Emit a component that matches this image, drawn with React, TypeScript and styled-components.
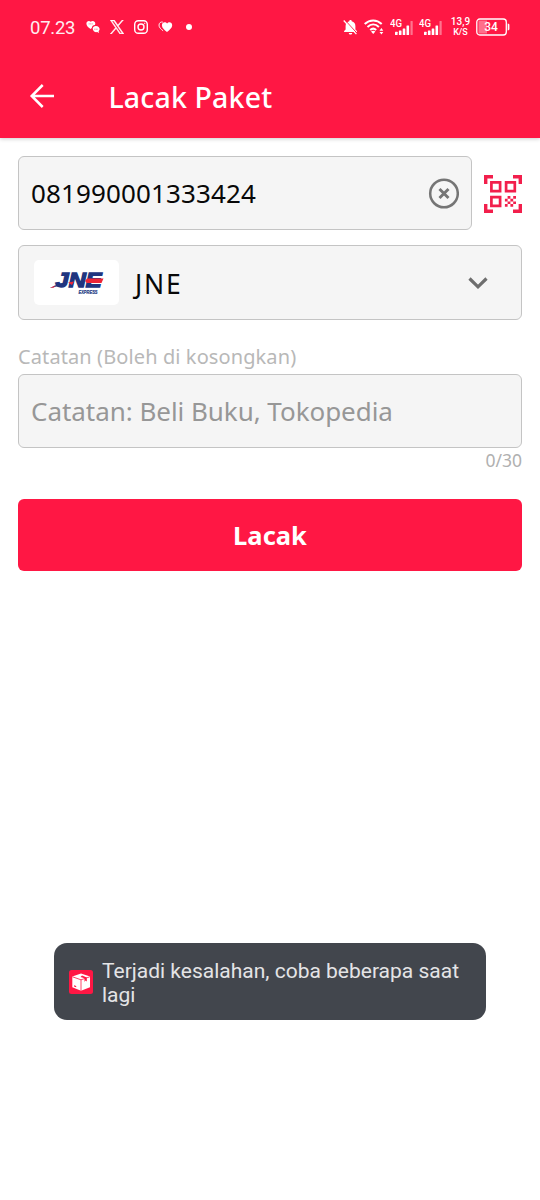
import React from 'react';
import styled, { createGlobalStyle } from 'styled-components';

const RED = '#ff1744';

const GlobalStyle = createGlobalStyle`
  * { box-sizing: border-box; }
  body { margin: 0; background: #fff; font-family: 'Noto Sans', sans-serif; }
`;

const Screen = styled.div`
  width: 540px;
  height: 1200px;
  display: flex;
  flex-direction: column;
  background: #fff;
  overflow: hidden;
`;

const Header = styled.header`
  height: 138px;
  flex: none;
  background: ${RED};
  color: #fff;
  box-shadow: 0 1px 4px rgba(0, 0, 0, 0.2);
`;

const StatusBar = styled.div`
  height: 54px;
  padding: 0 30px;
  display: flex;
  align-items: center;
  justify-content: space-between;
  font-family: Roboto, sans-serif;
`;

const StatusGroup = styled.div<{ $gap: number }>`
  display: flex;
  align-items: center;
  gap: ${(p) => p.$gap}px;
  svg { display: block; }
`;

const Clock = styled.span`
  width: 46px;
  font-size: 18.5px;
  line-height: 22px;
  letter-spacing: -0.25px;
  padding-top: 2px;
  opacity: 0.92;
`;

const Dot = styled.span`
  width: 6px;
  height: 6px;
  margin-left: 3px;
  border-radius: 50%;
  background: #fff;
`;

const Speed = styled.span`
  display: flex;
  flex-direction: column;
  align-items: center;
  width: 19px;
  margin-left: 3px;
  font-size: 9px;
  font-weight: 500;
  line-height: 10px;
  white-space: nowrap;
`;

const SpeedFigure = styled.span`
  font-size: 10px;
`;

const TitleBar = styled.div`
  height: 84px;
  padding-left: 28px;
  display: flex;
  align-items: center;
`;

const Title = styled.h1`
  margin: 0 0 0 52.5px;
  padding-top: 2px;
  font-size: 28.500px;
  line-height: 40px;
  font-weight: 500;
  letter-spacing: 0.15px;
  white-space: nowrap;
`;

const Form = styled.main`
  padding: 18px 18px 0;
  display: flex;
  flex-direction: column;
`;

const Row = styled.div`
  display: flex;
  align-items: center;
  gap: 12px;
  margin-bottom: 15px;
`;

const Field = styled.div<{ $height: number; $left?: number; $right?: number }>`
  flex: 1;
  height: ${(p) => p.$height}px;
  padding: 0 ${(p) => p.$right ?? 12}px 0 ${(p) => p.$left ?? 12}px;
  display: flex;
  align-items: center;
  background: #f5f5f5;
  border: 1px solid #c4c4c4;
  border-radius: 6px;
  svg { display: block; }
`;

const Value = styled.span<{ $muted?: boolean; $tracking?: number; $size?: number }>`
  flex: 1;
  font-size: ${(p) => p.$size ?? 26}px;
  line-height: 36px;
  letter-spacing: ${(p) => p.$tracking ?? 0}px;
  color: ${(p) => (p.$muted ? '#979797' : '#080808')};
  white-space: nowrap;
`;

const CourierName = styled(Value)`
  padding-top: 2px;
`;

const LogoCard = styled.span`
  width: 85px;
  height: 45px;
  margin-right: 16px;
  background: #fff;
  border-radius: 5px;
`;

const Note = styled.section`
  display: flex;
  flex-direction: column;
  padding-top: 10px;
`;

const NoteField = styled(Field)`
  flex: none;
`;

const Label = styled.label`
  height: 29px;
  font-size: 20px;
  line-height: 24px;
  letter-spacing: 0.1px;
  color: #b8b8b8;
  white-space: nowrap;
`;

const Counter = styled.span`
  height: 25px;
  align-self: flex-end;
  font-size: 17.500px;
  line-height: 24px;
  color: #b0b0b0;
`;

const Submit = styled.button`
  height: 72px;
  margin-top: 26px;
  border: 0;
  border-radius: 6px;
  background: ${RED};
  color: #fff;
  font: 700 25.5px/36px 'Noto Sans', sans-serif;
`;

const Toast = styled.div`
  width: 432px;
  height: 77px;
  margin: auto auto 180px;
  padding: 0 15px;
  display: flex;
  align-items: center;
  gap: 9px;
  border-radius: 13px;
  background: #42464d;
  color: #e4e4e6;
  font: 400 21px/24px Roboto, sans-serif;
  svg { display: block; flex: none; }
`;

const ToastText = styled.span`
  padding-top: 3px;
`;

const ChatHearts = () => (
  <svg width="14" height="14" viewBox="0 0 14 14" fill="#fff">
    <path d="M4.600 9C2 7.400.4 5.500.4 3.500.400.900 3.300.2 4.700 1.800 6.200.200 9.300.900 9.300 3.500c0 .6-.2 1.100-.4 1.500C7.200 5 6 6.200 5.800 8z" />
    <path d="M6.700 8.500C6.900 6.800 8.300 5.700 10 5.900c2.200.1 3.600 1.500 3.600 3.100 0 1-.5 1.700-1 2.200l.5 1.700-1.900-.8c-2.200.4-4.400-.8-4.500-3.600z" />
    <path d="M2.700 3.900h4M8.300 9.200h3.600" stroke={RED} strokeWidth=".6" strokeDasharray="1 .5" />
  </svg>
);

const XLogo = () => (
  <svg width="14" height="14" viewBox="0 0 24 24" fill="#fff" stroke="#fff" strokeWidth=".9">
    <path d="M14.300 10.200 23 0h-2.100l-7.500 8.700L7.400 0H.400l9.100 13.300L.400 24h2.100l8-9.300 6.400 9.300h7zM11.400 13.400l-.9-1.300L3.200 1.600h3.200l5.900 8.500.9 1.300 7.700 11.100h-3.200z" />
  </svg>
);

const Instagram = () => (
  <svg width="14" height="14" viewBox="0 0 14 14" fill="none" stroke="#fff" strokeWidth="1.400">
    <rect x=".7" y=".7" width="12.600" height="12.600" rx="3.600" />
    <circle cx="7" cy="7" r="3" />
    <circle cx="10.700" cy="3.300" r=".4" fill="#fff" strokeWidth=".6" />
  </svg>
);

const DoubleHeart = () => (
  <svg width="15" height="12" viewBox="0 0 14 12">
    <path d="M8.500 11C5.800 8.800 3.400 7 3.400 4.200c0-3 3.600-4 5.200-1.600 1.700-2.400 5.100-1.300 5.100 1.600 0 2.700-2.600 4.600-5.200 6.800z" fill="#fff" />
    <path d="M4.400 1.100C2.300.5.500 2 .5 4.100c0 2.300 1.800 4 4.100 5.700" fill="none" stroke="#fff" strokeWidth=".9" />
  </svg>
);

const MutedBell = () => (
  <svg width="15" height="17" viewBox="0 0 15 17">
    <path d="M7.500 1c.8 0 1.200.5 1.200 1.200 2.500.6 3.700 2.300 3.700 4.800v3.500l1.500 1.600v.9H1.100v-.9l1.500-1.600V7c0-2.500 1.200-4.200 3.700-4.800C6.300 1.500 6.700 1 7.500 1zM5.800 14h3.400c0 2.100-3.400 2.100-3.400 0z" fill="#fff" />
    <path d="m1.800 1 12.600 13.500" stroke={RED} strokeWidth="1" />
    <path d="m.7 1.500 12.700 13.600" stroke="#fff" strokeWidth="1.300" />
  </svg>
);

const Wifi = () => (
  <svg width="20" height="16" viewBox="0 0 20 16">
    <g fill="none" stroke="#fff" strokeWidth="2">
      <path d="M.7 4.900c5-4.700 12-4.700 17 0" />
      <path d="M3.500 8c3.400-3.200 8-3.200 11.400 0" />
      <path d="M6.200 11c1.800-1.700 4.200-1.700 6 0" />
    </g>
    <path d="m7 12.600 2.200 2.500 2.200-2.500c-1.300-1-3.100-1-4.400 0zM15.500 11.700l1.900-2.600 1.900 2.600zM15.500 13l1.900 2.600 1.900-2.600z" fill="#fff" />
  </svg>
);

const Signal = () => (
  <svg width="23" height="17" viewBox="0 0 23 17" fill="#fff">
    <text x="0" y="7.800" fontFamily="Roboto" fontSize="10" fontWeight="500" textLength="12" lengthAdjust="spacingAndGlyphs">4G</text>
    <rect x="5" y="12.800" width="2.600" height="3.200" rx=".5" />
    <rect x="8.900" y="11.500" width="2.600" height="4.500" rx=".5" />
    <rect x="12.700" y="9.500" width="2.600" height="6.500" rx=".5" />
    <rect x="16.500" y="6.500" width="2.600" height="9.500" rx=".5" />
    <rect x="20.500" y="2" width="2.200" height="14" rx=".5" opacity=".4" />
  </svg>
);

const Battery = () => (
  <svg width="34" height="18" viewBox="0 0 34 18">
    <rect x="2.500" y="2.500" width="8.500" height="13" fill="#fff" opacity=".38" />
    <rect x=".8" y="1" width="29.500" height="16" rx="3" fill="none" stroke="#fff" strokeWidth="1.300" />
    <path d="M31.700 5.500c1.200.3 1.700.7 1.700 1.500v4c0 .8-.5 1.200-1.700 1.500z" fill="#fff" />
    <text x="15" y="13.300" textAnchor="middle" fontFamily="Roboto" fontSize="12" fontWeight="500" fill="#fff">34</text>
  </svg>
);

const BackArrow = () => (
  <svg width="28" height="28" viewBox="0 0 28 28" fill="none" stroke="#fff" strokeWidth="2.500">
    <path d="M26 14H4M14.700 3 3.700 14l11 11" />
  </svg>
);

const ClearIcon = () => (
  <svg width="32" height="32" viewBox="0 0 32 32" fill="none" stroke="#757575">
    <circle cx="17" cy="16.500" r="13.800" strokeWidth="2.500" />
    <path d="m12.500 12 9 9m0-9-9 9" strokeWidth="2.900" />
  </svg>
);

const QrScan = () => (
  <svg width="38" height="40" viewBox="0 -2 38 40">
    <g fill="none" stroke="#f21f4c">
      <path d="M1.700 9V1.700H9M29 1.700h7.300V9M1.700 29v7.300H9M29 36.300h7.300V29" strokeWidth="3.400" />
      <path d="M7.400 7.400h8.700v8.700H7.400zM22.100 7.400h8.700v8.700h-8.700zM7.400 22.100h8.700v8.700H7.400z" strokeWidth="2.700" />
    </g>
    <path d="M23.600 21h2.800v2.700h-2.800zM29.200 21H32v2.700h-2.800zM20.900 23.700h2.700v2.700h-2.700zM26.400 23.700h2.800v2.700h-2.800zM23.600 26.400h2.800v2.700h-2.800zM29.200 26.400H32v2.700h-2.800zM20.900 29.100h2.700v2.700h-2.700zM26.400 29.100h2.800v2.700h-2.800z" fill="#f21f4c" />
  </svg>
);

const Chevron = () => (
  <svg width="20" height="12" viewBox="0 0 20 12" fill="none" stroke="#6e6e6e" strokeWidth="3.200">
    <path d="m1.500 1.500 8.500 8.300 8.500-8.300" />
  </svg>
);

const JneLogo = () => (
  <svg width="85" height="45" viewBox="0 0 85 45">
    <text x="21.500" y="26.800" fontFamily="Liberation Sans" fontSize="21" fontWeight="700" fontStyle="italic" fill="#20357f" stroke="#20357f" strokeWidth="1.400" textLength="46" lengthAdjust="spacingAndGlyphs">JNE</text>
    <path d="M16 28c6-3 9-4.500 14-5.500L27 27c-3-1-6 0-11 1z" fill="#20357f" />
    <path d="m16 28 5-2.500-1 2zM34 22.500l6-1-2 3.500zM53 18.500h16.500L67.500 23H53l-2-2z" fill="#ed2637" />
    <text x="44.500" y="34.200" fontFamily="Liberation Sans" fontSize="6" fontWeight="700" fontStyle="italic" fill="#20357f" stroke="#20357f" strokeWidth=".2" textLength="19" lengthAdjust="spacingAndGlyphs">EXPRESS</text>
  </svg>
);

const PackageIcon = () => (
  <svg width="24" height="24" viewBox="0 0 24 24">
    <rect width="24" height="24" rx="2.500" fill={RED} />
    <path d="m12 3.500 9 3v10.800L12 20.800l-8.700-3.500V6.500z" fill="#fff" />
    <path d="m3.500 6.800 8.500 3 8.800-3M12 9.800v11" fill="none" stroke={RED} strokeWidth=".8" />
    <path d="m13 5.500 4.800 2v4l-1.400-1-.9 1.600V8.300L11.500 7zM5 15.200l2.200.8v1.200L5 16.400z" fill={RED} />
  </svg>
);

export default function App() {
  return (
    <Screen>
      <GlobalStyle />
      <Header>
        <StatusBar>
          <StatusGroup $gap={10}>
            <Clock>07.23</Clock>
            <ChatHearts />
            <XLogo />
            <Instagram />
            <DoubleHeart />
            <Dot />
          </StatusGroup>
          <StatusGroup $gap={6}>
            <MutedBell />
            <Wifi />
            <Signal />
            <Signal />
            <Speed>
              <SpeedFigure>13,9</SpeedFigure>
              <span>K/S</span>
            </Speed>
            <Battery />
          </StatusGroup>
        </StatusBar>
        <TitleBar>
          <BackArrow />
          <Title>Lacak Paket</Title>
        </TitleBar>
      </Header>
      <Form>
        <Row>
          <Field $height={74}>
            <Value $tracking={0.13}>081990001333424</Value>
            <ClearIcon />
          </Field>
          <QrScan />
        </Row>
        <Row>
          <Field $height={75} $left={15} $right={33}>
            <LogoCard><JneLogo /></LogoCard>
            <CourierName $size={26.5} $tracking={1.8}>JNE</CourierName>
            <Chevron />
          </Field>
        </Row>
        <Note>
          <Label>Catatan (Boleh di kosongkan)</Label>
          <NoteField $height={74}>
            <Value $muted $tracking={-0.04}>Catatan: Beli Buku, Tokopedia</Value>
          </NoteField>
          <Counter>0/30</Counter>
        </Note>
        <Submit>Lacak</Submit>
      </Form>
      <Toast>
        <PackageIcon />
        <ToastText>Terjadi kesalahan, coba beberapa saat lagi</ToastText>
      </Toast>
    </Screen>
  );
}
